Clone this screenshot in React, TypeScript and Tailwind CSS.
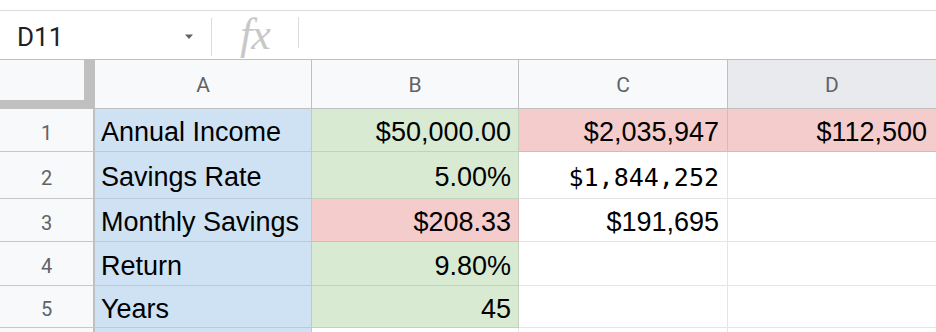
import React from "react";

type Cell = { text?: string; bg?: string; align?: "left" | "right"; mono?: boolean };

const rows: { n: number; h: string; cells: Cell[] }[] = [
  {
    n: 1,
    h: "h-[43px]",
    cells: [
      { text: "Annual Income", bg: "bg-[#cfe2f3]", align: "left" },
      { text: "$50,000.00", bg: "bg-[#d9ead3]" },
      { text: "$2,035,947", bg: "bg-[#f4cccc]" },
      { text: "$112,500", bg: "bg-[#f4cccc]" },
    ],
  },
  {
    n: 2,
    h: "h-[47px]",
    cells: [
      { text: "Savings Rate", bg: "bg-[#cfe2f3]", align: "left" },
      { text: "5.00%", bg: "bg-[#d9ead3]" },
      { text: "$1,844,252", mono: true },
      {},
    ],
  },
  {
    n: 3,
    h: "h-[43px]",
    cells: [
      { text: "Monthly Savings", bg: "bg-[#cfe2f3]", align: "left" },
      { text: "$208.33", bg: "bg-[#f4cccc]" },
      { text: "$191,695" },
      {},
    ],
  },
  {
    n: 4,
    h: "h-[44px]",
    cells: [
      { text: "Return", bg: "bg-[#cfe2f3]", align: "left" },
      { text: "9.80%", bg: "bg-[#d9ead3]" },
      {},
      {},
    ],
  },
  {
    n: 5,
    h: "h-[42px]",
    cells: [
      { text: "Years", bg: "bg-[#cfe2f3]", align: "left" },
      { text: "45", bg: "bg-[#d9ead3]" },
      {},
      {},
    ],
  },
];

const widths = ["w-[217px]", "w-[207px]", "w-[209px]", "w-[209px]"];
const padR = ["pr-[7px]", "pr-[7px]", "pr-[8px]", "pr-[9px]"];

export default function App() {
  return (
    <div className="w-[936px] h-[332px] overflow-hidden bg-white font-['Liberation_Sans',Arial,sans-serif]">
      {/* top strip */}
      <div className="h-[11px] bg-white border-b border-[#dadce0]" />
      {/* formula bar */}
      <div className="h-[49px] flex items-center border-b border-[#c0c0c0]">
        <div className="w-[211px] h-full flex items-center pl-[17px] pr-[17px]">
          <span className="text-[26px] text-[#202124] font-['Roboto',sans-serif] leading-none flex-1 mt-[3px]">D11</span>
          <svg width="10" height="6" viewBox="0 0 10 6" className="ml-auto mt-[4px]">
            <path d="M1 0.5 L9 0.5 L5 5 Z" fill="#5f6368" />
          </svg>
        </div>
        <div className="w-px h-[38px] bg-[#dadce0] self-end mb-[3px]" />
        <div className="w-[86px] h-full flex items-center justify-center">
          <span className="text-[44px] italic text-[#c8c8c8] font-['Liberation_Serif',serif] leading-none mt-[-1px] tracking-[-1px]">
            fx
          </span>
        </div>
        <div className="w-px h-[31px] bg-[#dadce0] mt-[-6px]" />
      </div>
      {/* column header row */}
      <div className="flex h-[49px] border-b border-[#c0c0c0]">
        <div className="w-[95px] h-full bg-[#c0c0c0] shrink-0">
          <div className="w-[84px] h-[40px] bg-[#f8f9fa]" />
        </div>
        {["A", "B", "C", "D"].map((l, i) => (
          <div
            key={l}
            className={`${widths[i]} shrink-0 h-full flex items-center justify-center pt-[3px] border-r border-[#c0c0c0] text-[21px] text-[#5f6368] font-['Roboto',sans-serif] ${
              l === "D" ? "bg-[#e8eaed]" : "bg-[#f8f9fa]"
            }`}
          >
            {l}
          </div>
        ))}
      </div>
      {/* rows */}
      {rows.map((r) => (
        <div key={r.n} className={`flex ${r.h}`}>
          <div className="w-[95px] shrink-0 h-full bg-[#f8f9fa] border-r-2 border-b border-r-[#c0c0c0] border-b-[#c8c8c8] flex items-center justify-center pt-[5px] text-[20px] text-[#5f6368] font-['Roboto',sans-serif]">
            {r.n}
          </div>
          {r.cells.map((c, i) => (
            <div
              key={i}
              className={`${widths[i]} shrink-0 h-full border-r border-b border-black/10 flex items-center pt-[5px] ${
                c.bg ?? "bg-white"
              } ${c.align === "left" ? "justify-start pl-[6px]" : `justify-end ${padR[i]}`}`}
            >
              {c.text && (
                <span
                  className={
                    c.mono
                      ? "text-[25px] text-black font-['DejaVu_Sans_Mono',monospace] leading-none"
                      : "text-[27px] text-black leading-none"
                  }
                >
                  {c.text}
                </span>
              )}
            </div>
          ))}
        </div>
      ))}
      <div className="flex h-[10px]">
        <div className="w-[95px] shrink-0 h-full bg-[#f8f9fa] border-r-2 border-[#c0c0c0]" />
        <div className="w-[217px] shrink-0 h-full bg-[#cfe2f3] border-r border-black/10" />
        <div className="w-[207px] shrink-0 h-full border-r border-black/10" />
        <div className="w-[209px] shrink-0 h-full border-r border-black/10" />
      </div>
    </div>
  );
}
